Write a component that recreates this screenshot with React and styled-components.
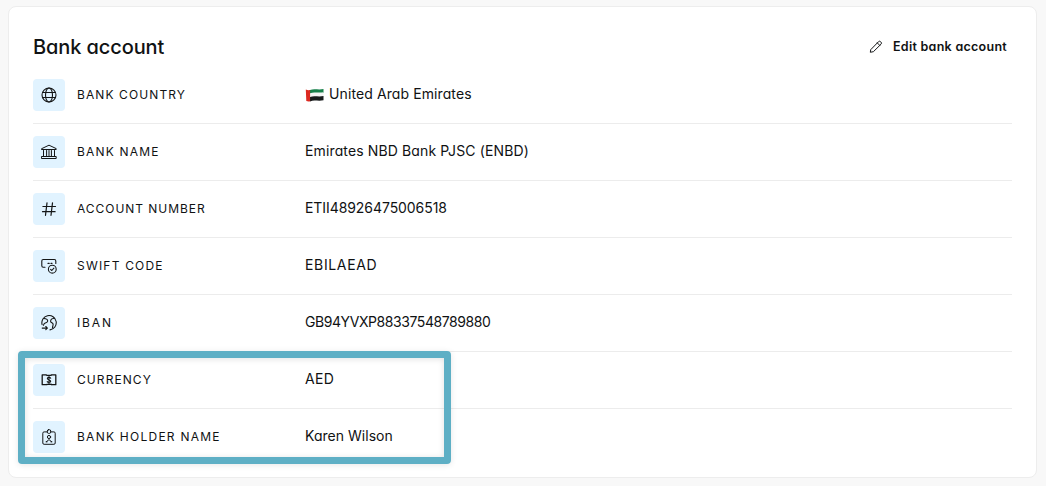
import React from "react";
import styled, { createGlobalStyle } from "styled-components";

const GlobalStyle = createGlobalStyle`
  * {
    box-sizing: border-box;
  }
  body {
    margin: 0;
    background: #f8f8f8;
    color: #101213;
    font-family: Inter, "Open Sans", sans-serif;
    font-feature-settings: "cv11", "ss03";
  }
`;

const Page = styled.main`
  height: 486px;
  padding: 6px 9px 8px 8px;
  overflow: hidden;
`;

const Card = styled.section`
  position: relative;
  height: 472px;
  padding: 0 24px;
  background: #fff;
  border: 1px solid #ededed;
  border-radius: 8px;
`;

const Header = styled.header`
  display: flex;
  align-items: center;
  justify-content: space-between;
  height: 60px;
  padding: 20px 5px 0 0;
`;

const Title = styled.h2`
  margin: 0;
  font-size: 20px;
  line-height: 28px;
  font-weight: 500;
  letter-spacing: -0.1px;
`;

const EditButton = styled.button`
  display: flex;
  align-items: center;
  gap: 9px;
  padding: 0;
  border: none;
  background: none;
  color: #101213;
  font-family: inherit;
  font-feature-settings: inherit;
  font-size: 12.5px;
  line-height: 18px;
  font-weight: 600;
  letter-spacing: 0.27px;
  white-space: nowrap;
  cursor: pointer;
`;

const Rows = styled.div`
  display: flex;
  flex-direction: column;
`;

const Row = styled.div`
  display: grid;
  grid-template-columns: 32px 216px 1fr;
  align-items: center;
  column-gap: 12px;
  height: 57px;
  border-bottom: 1px solid #ececec;

  &:last-child {
    border-bottom-color: transparent;
  }
`;

const IconBox = styled.div`
  display: flex;
  align-items: center;
  justify-content: center;
  width: 32px;
  height: 32px;
  border-radius: 4px;
  background: #e1f3ff;
`;

const Icon = styled.svg`
  display: block;
  width: 16px;
  height: 16px;
  fill: none;
  stroke: #141617;
  stroke-width: ${({ $weight }) => $weight || 1.1};
  stroke-linecap: round;
  stroke-linejoin: round;
`;

const Label = styled.span`
  font-size: 12px;
  line-height: 16px;
  letter-spacing: ${({ $spacing }) => $spacing}px;
  white-space: nowrap;
`;

const Value = styled.span`
  display: flex;
  align-items: center;
  padding-bottom: 2px;
  font-size: 14px;
  line-height: 20px;
  letter-spacing: ${({ $spacing }) => $spacing}px;
  white-space: nowrap;
`;

const FlagSvg = styled.svg`
  width: 19px;
  height: 14px;
  margin: 1px 5px 0 0;
`;

const Highlight = styled.div`
  position: absolute;
  left: 9px;
  top: 344px;
  width: 433px;
  height: 113px;
  border: 7px solid #5eafc5;
  border-radius: 4px;
  box-shadow: 0 1px 6px rgba(0, 0, 0, 0.1), inset 0 1px 6px rgba(0, 0, 0, 0.12);
  pointer-events: none;
`;

const GlobeIcon = () => (
  <Icon viewBox="0 0 16 16">
    <circle cx="8" cy="8" r="7" />
    <ellipse cx="8" cy="8" rx="3.5" ry="7" />
    <path d="M1.7 5.5h12.6M1.7 10.5h12.6" />
  </Icon>
);

const BankIcon = () => (
  <Icon viewBox="0 0 16 16" $weight={1}>
    <path d="M.8 4.6 8 1.2l7.2 3.4v.9H.8zM2.5 6.5v5.3M5.6 6.5v5.3M8 6.5v5.3M10.4 6.5v5.3M13.5 6.5v5.3M.8 14.5h14.4v-2H.8z" />
  </Icon>
);

const HashIcon = () => (
  <Icon viewBox="0 0 16 16" $weight={1.2}>
    <path d="M6 1.9 4.5 14.3M11.5 1.9 10 14.3M1.9 5.5h12.6M1.5 10.7h12.6" />
  </Icon>
);

const SwiftIcon = () => (
  <Icon viewBox="0 0 16 16">
    <path d="M4 9.2H2.2A1.4 1.4 0 0 1 .8 7.8V2.9a1.4 1.4 0 0 1 1.4-1.4h11.2a1.4 1.4 0 0 1 1.4 1.4v2.5M7 5.4h1.2M10 5.4h1" />
    <circle cx="11.3" cy="11.2" r="3.9" />
    <path d="m9.6 11.3 1.2 1.2 2.1-2.4" />
  </Icon>
);

const IbanIcon = () => (
  <Icon viewBox="0 0 16 16" $weight={1.1}>
    <path d="M1.1 9.6A7.2 7.2 0 1 1 9 14.9" />
    <path d="M2.9 3.5c1.6.1 3.8.6 3.8 2.5 0 2.1-3.2 1.2-3.8 3.1l-.4 1.2M13.2 3.3c-1.8.2-3.6 1.3-3.6 3 0 1.8 2.4 1.3 2.5 3 .1 1.3-.6 2-.6 3.6" />
    <path d="M1.2 13.1h5.2M4.8 11.5l1.6 1.6-1.6 1.6" />
  </Icon>
);

const CurrencyIcon = () => (
  <Icon viewBox="0 0 16 16">
    <path d="M5.2 2.9H1.2v9.8h4.6M10.6 12.7h4.2V2.9h-4.6M5.1 2.9l1 .6M10.9 12.7l-1-.6M6 3.3h4.2M5.8 12.4h4.4" strokeWidth="1.3" />
    <path d="M9.7 6.2C9.3 5.6 8.8 5.4 8 5.4c-1 0-1.7.5-1.7 1.2 0 1.7 3.4 1 3.4 2.7 0 .8-.7 1.2-1.7 1.2-.8 0-1.4-.3-1.8-.9M8 4.4v7.1" />
  </Icon>
);

const HolderIcon = () => (
  <Icon viewBox="0 0 16 16" $weight={1}>
    <path d="M6 2.9H3.1a1.3 1.3 0 0 0-1.3 1.3V14a1.3 1.3 0 0 0 1.3 1.3h9.8a1.3 1.3 0 0 0 1.3-1.3V4.2a1.3 1.3 0 0 0-1.3-1.3H10" />
    <rect x="6.3" y=".7" width="3.4" height="3.7" rx="1.3" />
    <circle cx="8" cy="8" r="1.6" />
    <path d="M5.3 12.8 8 10.6l2.7 2.2M5.1 12.8h1M9.9 12.8h1" />
  </Icon>
);

const PencilIcon = () => (
  <Icon viewBox="-1 0 16 16" $weight={1}>
    <path d="m2 10.4 7.5-7.7a1.5 1.5 0 0 1 2.1 0l.4.4a1.5 1.5 0 0 1 0 2.1l-7.6 7.5-2.7.5zM8.3 3.9l2.5 2.5" />
  </Icon>
);

const Flag = () => (
  <FlagSvg viewBox="0 0 19 14">
    <path d="M5 2.1C9 .2 13 2.2 18.5 1v4C13 6.2 9 4.2 5 6.1z" fill="#16804a" />
    <path d="M5 5.3C9 3.4 13 5.4 18.5 4.2v4.6C13 10 9 8 5 9.9z" fill="#f3f4f4" />
    <path d="M5 9.1c4-1.9 8 .1 13.5-1.1v4.3C13 13.5 9 11.5 5 13.4z" fill="#171a1b" />
    <path d="M.8 1.4c1.4.7 2.8.9 4.3.6v11.3c-1.2.5-2.5.3-3.8-.2z" fill="#dc2920" />
  </FlagSvg>
);

const details = [
  { icon: GlobeIcon, label: "BANK COUNTRY", labelSpacing: 1.1, value: "United Arab Emirates", spacing: 0.1, flag: true },
  { icon: BankIcon, label: "BANK NAME", labelSpacing: 1.2, value: "Emirates NBD Bank PJSC (ENBD)", spacing: 0.13 },
  { icon: HashIcon, label: "ACCOUNT NUMBER", labelSpacing: 0.96, value: "ETII48926475006518", spacing: -0.07 },
  { icon: SwiftIcon, label: "SWIFT CODE", labelSpacing: 1.2, value: "EBILAEAD", spacing: 0.65 },
  { icon: IbanIcon, label: "IBAN", labelSpacing: 1.9, value: "GB94YVXP88337548789880", spacing: -0.43 },
  { icon: CurrencyIcon, label: "CURRENCY", labelSpacing: 1.07, value: "AED", spacing: 0.3 },
  { icon: HolderIcon, label: "BANK HOLDER NAME", labelSpacing: 1.25, value: "Karen Wilson", spacing: 0.03 },
];

const App = () => (
  <>
    <GlobalStyle />
    <Page>
      <Card>
        <Header>
          <Title>Bank account</Title>
          <EditButton type="button">
            <PencilIcon />
            Edit bank account
          </EditButton>
        </Header>
        <Rows>
          {details.map(({ icon: RowIcon, label, labelSpacing, value, spacing, flag }) => (
            <Row key={label}>
              <IconBox>
                <RowIcon />
              </IconBox>
              <Label $spacing={labelSpacing}>{label}</Label>
              <Value $spacing={spacing}>
                {flag && <Flag />}
                {value}
              </Value>
            </Row>
          ))}
        </Rows>
        <Highlight />
      </Card>
    </Page>
  </>
);

export default App;
